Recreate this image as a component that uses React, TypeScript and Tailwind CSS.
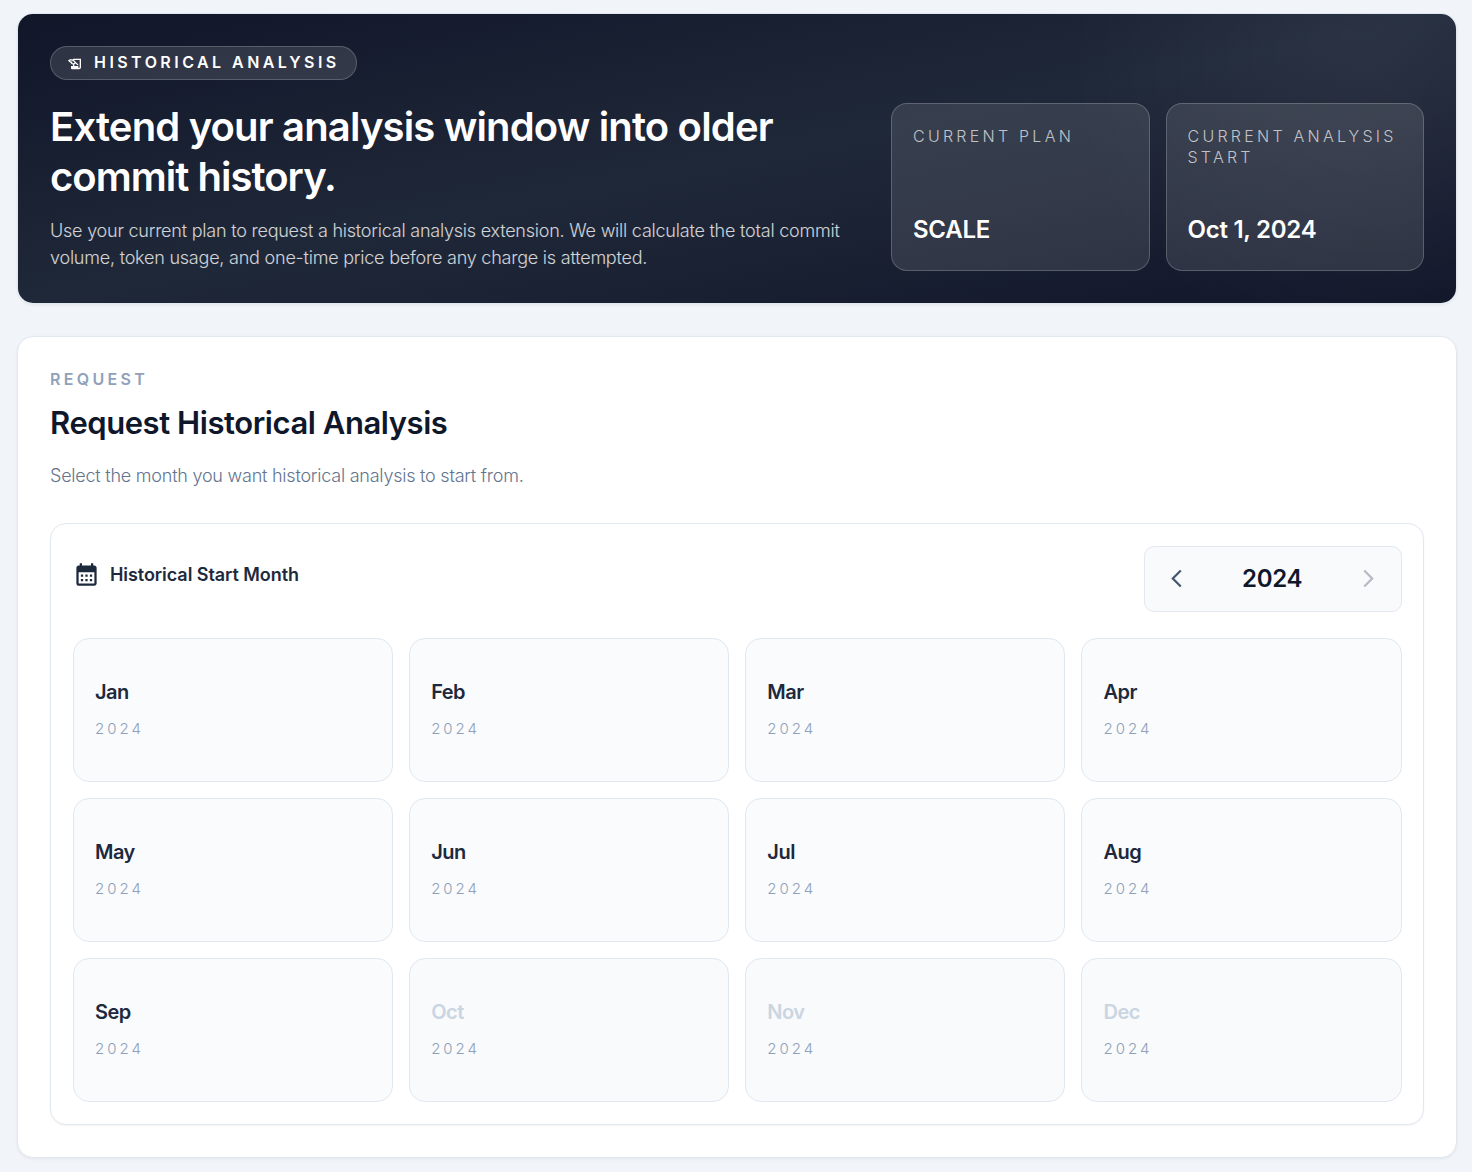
import React, { useState } from 'react';
import {
  MdArrowBackIosNew,
  MdArrowForwardIos,
  MdCalendarMonth,
  MdHistoryEdu
} from 'react-icons/md';

const MONTHS = ['Jan', 'Feb', 'Mar', 'Apr', 'May', 'Jun', 'Jul', 'Aug', 'Sep', 'Oct', 'Nov', 'Dec'];

// Analysis currently starts on Oct 1, 2024
const START_YEAR = 2024;
const START_MONTH = 9;

interface StatCardProps {
  label: string;
  value: string;
}

const StatCard: React.FC<StatCardProps> = ({ label, value }) => (
  <div className="flex h-[168px] flex-1 flex-col justify-between rounded-2xl border border-white/20 bg-white/11 px-[21px] pt-[22px] pb-5">
    <div className="text-base font-light leading-[21px] tracking-[3.25px] text-white/70 uppercase">{label}</div>
    <div className="text-2xl font-semibold leading-10 tracking-[-0.25px] text-white">{value}</div>
  </div>
);

interface MonthCardProps {
  month: string;
  year: number;
  disabled: boolean;
  onSelect: () => void;
}

const MonthCard: React.FC<MonthCardProps> = ({ month, year, disabled, onSelect }) => (
  <button
    onClick={onSelect}
    disabled={disabled}
    className={`flex h-36 flex-col justify-center rounded-2xl border border-slate-200 px-[21px] pb-[3px] text-left ${
      disabled ? 'bg-slate-50 text-slate-300' : 'bg-[#fafbfd] text-slate-800'
    }`}
  >
    <span className="text-xl font-semibold leading-7 tracking-[-0.5px]">{month}</span>
    <span className="mt-[13px] text-[15px] font-light leading-5 tracking-[3px] text-slate-400">{year}</span>
  </button>
);

export default function App() {
  const [year, setYear] = useState(START_YEAR);
  const [, setSelected] = useState<string | null>(null);

  const isDisabled = (index: number) => year === START_YEAR && index >= START_MONTH;

  return (
    <div className="flex min-h-[1172px] flex-col gap-8 bg-[#f1f5fa] pt-[13px] pr-[15px] pb-[14px] pl-[17px] font-['Inter',sans-serif]">
      {/* Hero */}
      <section className="rounded-2xl border border-slate-200 shadow-[0_1px_3px_rgba(15,23,42,0.07)]">
        <div className="rounded-[15px] bg-linear-to-br from-[#111629] via-[#1f2839] to-[#111629]">
          <div className="flex items-end justify-between rounded-[15px] bg-[radial-gradient(circle_at_94%_15%,rgba(255,255,255,0.055),transparent_22%)] p-8">
            <div className="w-[800px]">
              <div className="flex h-[34px] w-[307px] items-center gap-[11px] rounded-full border border-white/20 bg-white/12 pb-0.5 pl-4 text-white">
                <MdHistoryEdu className="mt-[3px] h-4 w-4 shrink-0" />
                <span className="text-base font-semibold leading-none tracking-[3.45px] whitespace-nowrap uppercase">
                  Historical Analysis
                </span>
              </div>
              <h1 className="mt-[22px] text-[40px] font-[580] leading-[50px] tracking-[-0.84px] text-white">
                Extend your analysis window into older
                <br />
                <span className="tracking-[-0.98px]">commit history.</span>
              </h1>
              <p className="mt-[15px] text-lg font-light leading-[27px] tracking-[-0.22px] whitespace-nowrap text-white/80">
                Use your current plan to request a historical analysis extension. We will calculate the total commit
                <br />
                volume, token usage, and one-time price before any charge is attempted.
              </p>
            </div>
            <div className="flex w-[533px] gap-4">
              <StatCard label="Current Plan" value="SCALE" />
              <StatCard label="Current Analysis Start" value="Oct 1, 2024" />
            </div>
          </div>
        </div>
      </section>

      {/* Request */}
      <section className="rounded-2xl border border-slate-200 bg-white p-8 shadow-[0_1px_3px_rgba(15,23,42,0.07)]">
        <div className="text-base font-semibold leading-5 tracking-[3.3px] text-slate-400 uppercase">Request</div>
        <h2 className="mt-3 text-[31px] font-semibold leading-[44px] tracking-[-0.44px] text-slate-900">
          Request Historical Analysis
        </h2>
        <p className="mt-[17px] text-lg font-light leading-7 tracking-[-0.23px] text-slate-500">
          Select the month you want historical analysis to start from.
        </p>

        <div className="mt-[33px] rounded-2xl border border-slate-200 bg-white py-[22px] pr-[21.4px] pl-[22px] shadow-[0_1px_2px_rgba(15,23,42,0.05)]">
          <div className="flex items-start justify-between">
            <div className="flex items-center gap-[10px] pt-[14px] text-slate-800">
              <MdCalendarMonth className="h-[27px] w-[27px]" />
              <span className="pt-0.5 text-lg font-semibold leading-[26px] tracking-[-0.06px]">Historical Start Month</span>
            </div>
            <div className="flex h-[66px] w-[258px] items-center justify-between rounded-[10px] border border-slate-200 bg-slate-50 pr-[22px] pl-[21px]">
              <button onClick={() => setYear(year - 1)} className="pb-px text-slate-600">
                <MdArrowBackIosNew className="h-[21px] w-[21px]" />
              </button>
              <span className="text-2xl font-semibold leading-none tracking-[-0.3px] text-slate-900">{year}</span>
              <button onClick={() => setYear(year + 1)} disabled={year >= START_YEAR} className="pb-px text-[#b6bac5]">
                <MdArrowForwardIos className="h-[21px] w-[21px]" />
              </button>
            </div>
          </div>

          <div className="mt-[26px] grid grid-cols-4 gap-4">
            {MONTHS.map((month, index) => (
              <MonthCard
                key={month}
                month={month}
                year={year}
                disabled={isDisabled(index)}
                onSelect={() => setSelected(`${month} ${year}`)}
              />
            ))}
          </div>
        </div>
      </section>
    </div>
  );
}
